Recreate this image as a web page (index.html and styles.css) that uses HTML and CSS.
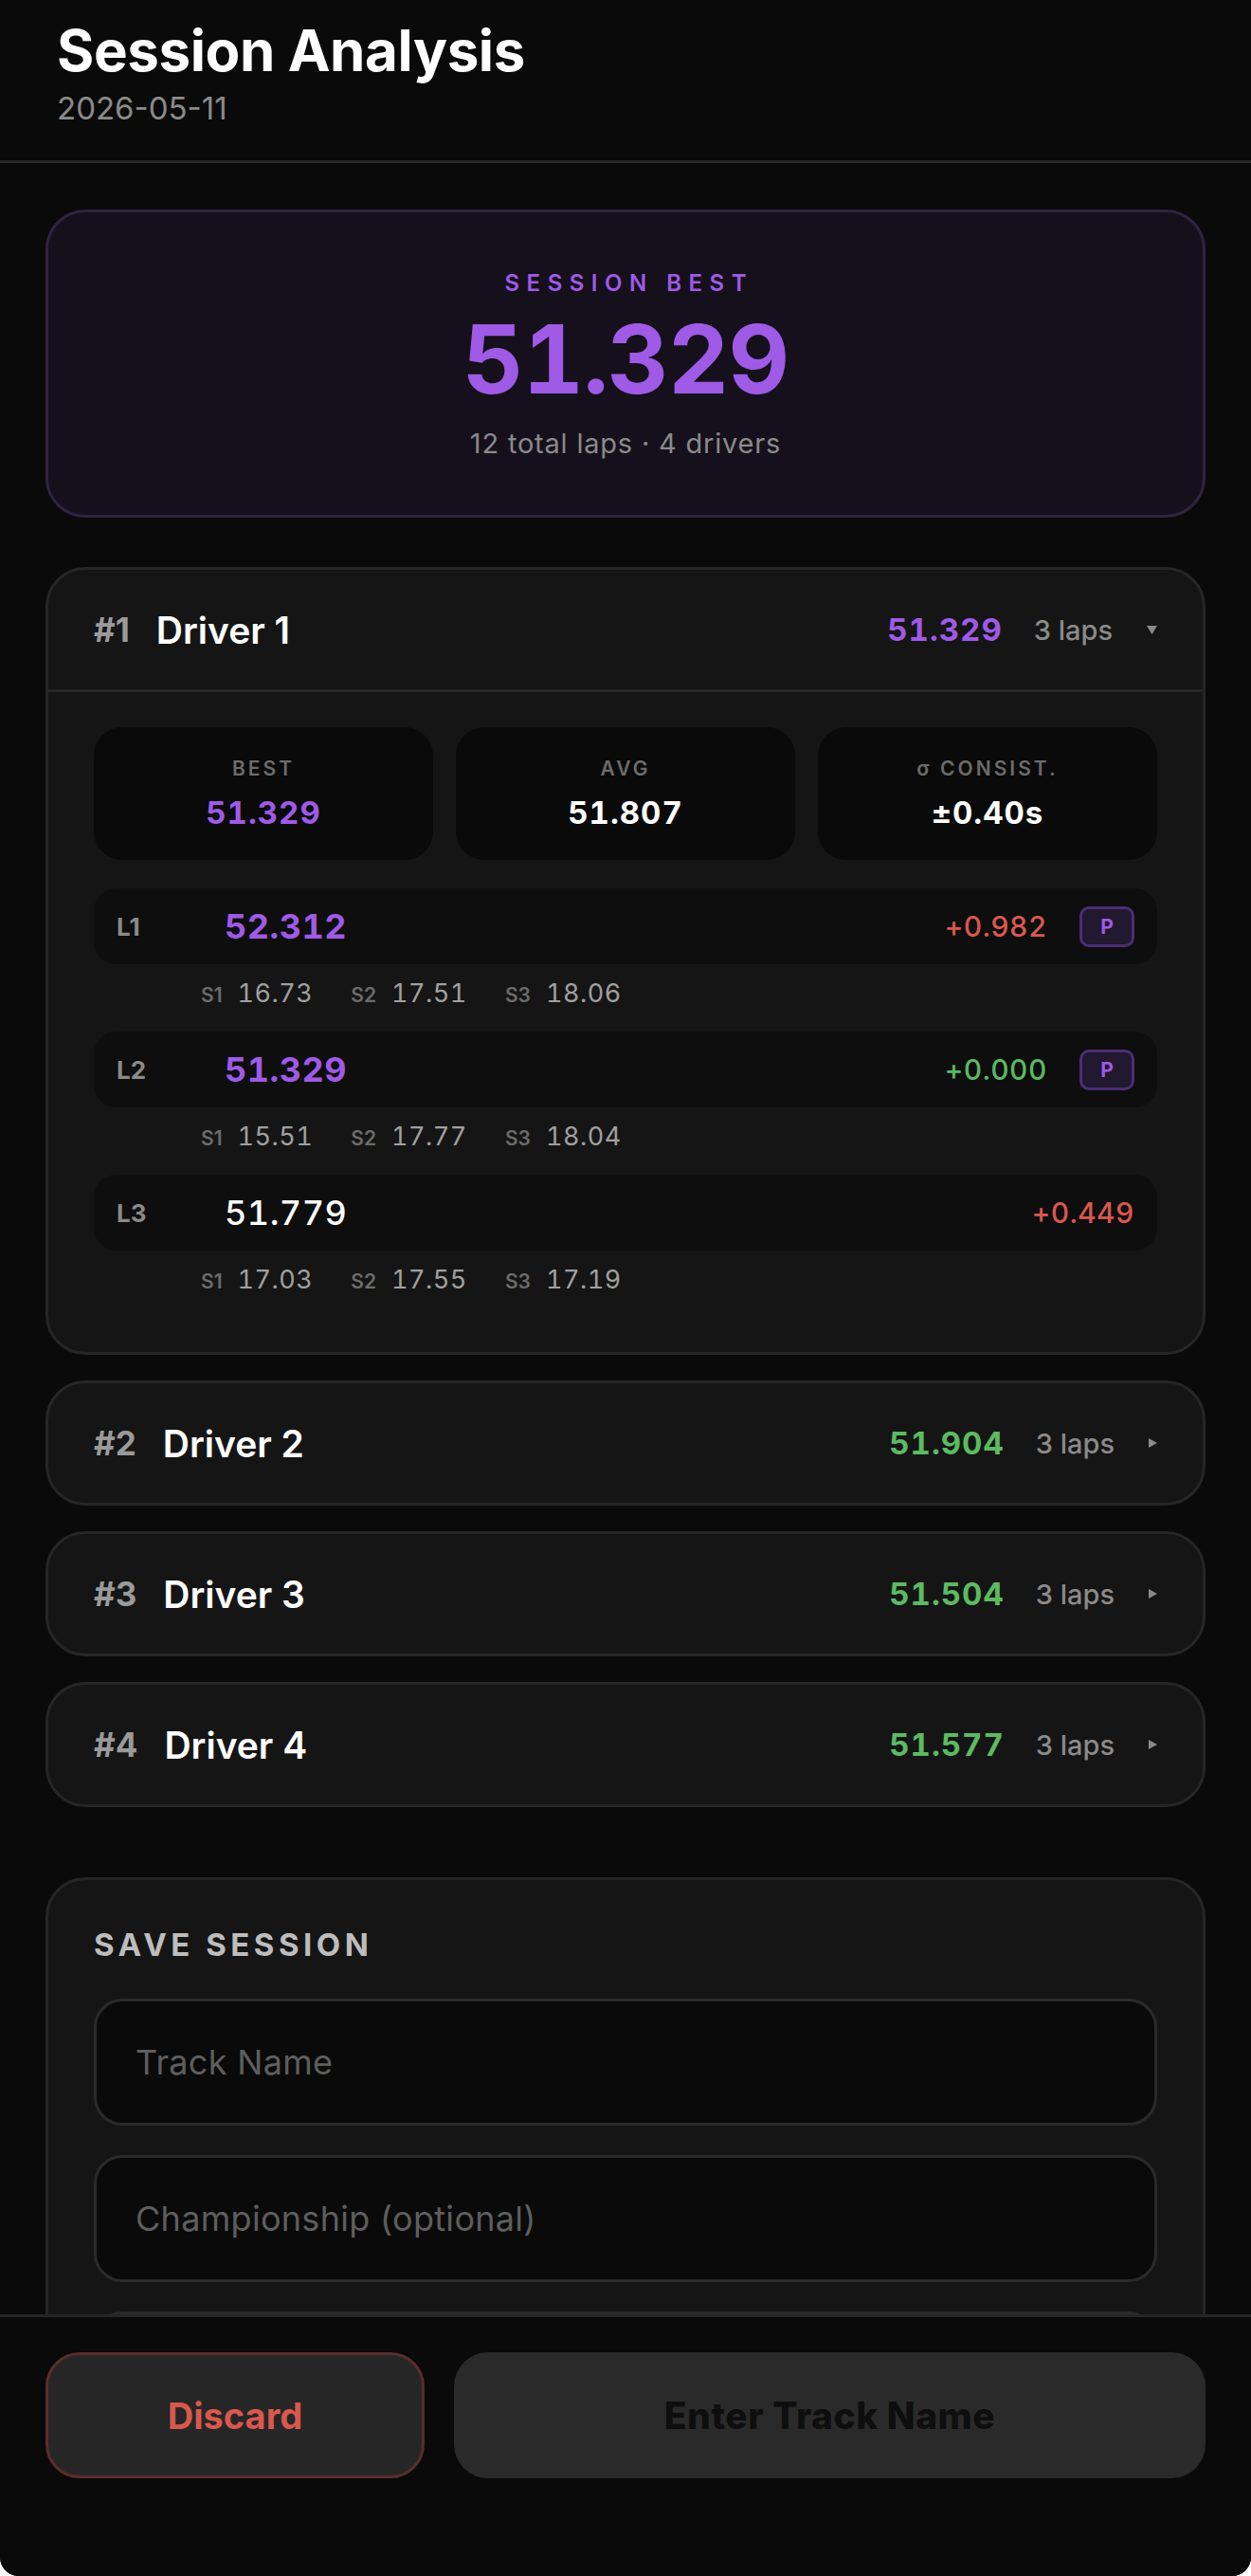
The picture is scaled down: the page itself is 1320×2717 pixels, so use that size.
FILE: index.html
```html
<!DOCTYPE html>
<html lang="en">
<head>
    <meta charset="UTF-8">
    <meta name="viewport" content="width=device-width, initial-scale=1.0">
    <title>Session Analysis</title>
    <link rel="stylesheet" href="styles.css">
</head>
<body>
<div class="app">
    <header class="top">
        <h1>Session Analysis</h1>
        <div class="date">2026-05-11</div>
    </header>

    <main class="content">
        <section class="best-card">
            <div class="best-label">SESSION BEST</div>
            <div class="best-time">51.329</div>
            <div class="best-sub">12 total laps · 4 drivers</div>
        </section>

        <div class="drivers">
            <div class="driver open">
                <div class="driver-head">
                    <span class="rank">#1</span>
                    <span class="name">Driver 1</span>
                    <span class="d-time purple">51.329</span>
                    <span class="laps">3 laps</span>
                    <svg class="caret" width="11" height="9" viewBox="0 0 11 9"><path d="M0 0h11L5.5 9z"/></svg>
                </div>
                <div class="driver-body">
                    <div class="stats">
                        <div class="stat">
                            <div class="stat-label">BEST</div>
                            <div class="stat-value purple">51.329</div>
                        </div>
                        <div class="stat">
                            <div class="stat-label">AVG</div>
                            <div class="stat-value">51.807</div>
                        </div>
                        <div class="stat">
                            <div class="stat-label">σ CONSIST.</div>
                            <div class="stat-value">±0.40s</div>
                        </div>
                    </div>

                    <div class="lap">
                        <div class="lap-row">
                            <span class="lap-no purple">L1</span>
                            <span class="lap-time purple">52.312</span>
                            <span class="delta red">+0.982</span>
                            <span class="badge">P</span>
                        </div>
                        <div class="sectors">
                            <span class="sec"><span class="sec-label">S1</span><span class="sec-val">16.73</span></span>
                            <span class="sec"><span class="sec-label">S2</span><span class="sec-val">17.51</span></span>
                            <span class="sec"><span class="sec-label">S3</span><span class="sec-val">18.06</span></span>
                        </div>
                    </div>

                    <div class="lap">
                        <div class="lap-row">
                            <span class="lap-no purple">L2</span>
                            <span class="lap-time purple">51.329</span>
                            <span class="delta green">+0.000</span>
                            <span class="badge">P</span>
                        </div>
                        <div class="sectors">
                            <span class="sec"><span class="sec-label">S1</span><span class="sec-val">15.51</span></span>
                            <span class="sec"><span class="sec-label">S2</span><span class="sec-val">17.77</span></span>
                            <span class="sec"><span class="sec-label">S3</span><span class="sec-val">18.04</span></span>
                        </div>
                    </div>

                    <div class="lap">
                        <div class="lap-row">
                            <span class="lap-no">L3</span>
                            <span class="lap-time plain">51.779</span>
                            <span class="delta red">+0.449</span>
                        </div>
                        <div class="sectors">
                            <span class="sec"><span class="sec-label">S1</span><span class="sec-val">17.03</span></span>
                            <span class="sec"><span class="sec-label">S2</span><span class="sec-val">17.55</span></span>
                            <span class="sec"><span class="sec-label">S3</span><span class="sec-val">17.19</span></span>
                        </div>
                    </div>
                </div>
            </div>

            <div class="driver">
                <div class="driver-head">
                    <span class="rank">#2</span>
                    <span class="name">Driver 2</span>
                    <span class="d-time green">51.904</span>
                    <span class="laps">3 laps</span>
                    <svg class="caret" width="9" height="10" viewBox="0 0 9 10"><path d="M0 0l9 5-9 5z"/></svg>
                </div>
            </div>

            <div class="driver">
                <div class="driver-head">
                    <span class="rank">#3</span>
                    <span class="name">Driver 3</span>
                    <span class="d-time green">51.504</span>
                    <span class="laps">3 laps</span>
                    <svg class="caret" width="9" height="10" viewBox="0 0 9 10"><path d="M0 0l9 5-9 5z"/></svg>
                </div>
            </div>

            <div class="driver">
                <div class="driver-head">
                    <span class="rank">#4</span>
                    <span class="name">Driver 4</span>
                    <span class="d-time green">51.577</span>
                    <span class="laps">3 laps</span>
                    <svg class="caret" width="9" height="10" viewBox="0 0 9 10"><path d="M0 0l9 5-9 5z"/></svg>
                </div>
            </div>
        </div>

        <section class="save-card">
            <h3>SAVE SESSION</h3>
            <input type="text" placeholder="Track Name">
            <input type="text" placeholder="Championship (optional)">
            <input type="text" placeholder="Notes (optional)">
        </section>
    </main>

    <footer class="actions">
        <button class="discard">Discard</button>
        <button class="save" disabled>Enter Track Name</button>
    </footer>
</div>
</body>
</html>
```

FILE: styles.css
```css
html {
    background: #fff;
}
body {
    margin: 0;
    font-family: Inter, "Noto Sans", sans-serif;
}
.app {
    height: 100vh;
    display: flex;
    flex-direction: column;
    background: #0a0a0a;
    color: #fff;
    border-radius: 0 0 20px 20px;
    overflow: hidden;
}
.purple { color: #9f5ae6; }
.green { color: #5cba62; }
.red { color: #d9584e; }

/* header */
.top {
    padding: 17px 60px 35px;
    border-bottom: 3px solid #262626;
}
.top h1 {
    margin: 0;
    font-size: 60px;
    line-height: 72px;
    font-weight: 700;
    letter-spacing: -0.4px;
}
.date {
    margin-top: 5px;
    font-size: 33px;
    line-height: 40px;
    color: #8a8a8a;
}

.content {
    flex: 1;
    min-height: 0;
    overflow: hidden;
    padding: 49px 48px 0;
}

/* session best */
.best-card {
    background: #15101c;
    border: 3px solid #2f2342;
    border-radius: 42px;
    padding: 60px 0 57px;
    text-align: center;
}
.best-label {
    font-size: 24px;
    line-height: 30px;
    font-weight: 600;
    letter-spacing: 7.5px;
    padding-left: 7.5px;
    color: #9f5ae6;
}
.best-time {
    margin-top: 15px;
    font-size: 100px;
    line-height: 100px;
    font-weight: 700;
    font-variant-numeric: tabular-nums;
    color: #9f5ae6;
    letter-spacing: -1px;
}
.best-sub {
    margin-top: 21px;
    font-size: 29px;
    line-height: 36px;
    color: #8a8a8a;
    letter-spacing: 0.8px;
}

/* drivers */
.drivers {
    margin-top: 52px;
    display: flex;
    flex-direction: column;
    gap: 27px;
}
.driver {
    background: #151515;
    border: 3px solid #262626;
    border-radius: 42px;
}
.driver-head {
    display: flex;
    align-items: center;
    height: 126px;
    padding: 0 48px;
}
.driver.open .driver-head {
    border-bottom: 3px solid #262626;
}
.rank {
    font-size: 35px;
    font-weight: 700;
    color: #9a9a9a;
    margin-right: 28px;
}
.name {
    flex: 1;
    font-size: 39px;
    font-weight: 600;
}
.d-time {
    font-size: 33px;
    font-weight: 700;
    font-variant-numeric: tabular-nums;
    letter-spacing: 1px;
}
.laps {
    margin-left: 33px;
    font-size: 29px;
    font-weight: 500;
    color: #8a8a8a;
}
.caret {
    margin-left: 36px;
    fill: #8a8a8a;
}

.driver-body {
    padding: 37px 48px 36px;
}
.stats {
    display: grid;
    grid-template-columns: repeat(3, 1fr);
    gap: 24px;
    margin-bottom: 30px;
}
.stat {
    background: #0a0a0a;
    border-radius: 30px;
    padding: 30px 0;
    text-align: center;
}
.stat-label {
    font-size: 21px;
    line-height: 28px;
    font-weight: 600;
    letter-spacing: 3px;
    color: #6b6b6b;
}
.stat-value {
    margin-top: 12px;
    font-size: 33px;
    line-height: 40px;
    font-weight: 700;
    font-variant-numeric: tabular-nums;
    letter-spacing: 1px;
}

/* laps */
.lap-row {
    display: flex;
    align-items: center;
    height: 80px;
    padding: 0 24px;
    background: #0e0e0e;
    border-radius: 24px;
}
.lap-no {
    width: 114px;
    font-size: 26px;
    font-weight: 700;
    color: #8a8a8a;
}
.lap-time {
    flex: 1;
    font-size: 36px;
    font-weight: 700;
    font-variant-numeric: tabular-nums;
    letter-spacing: 0.5px;
}
.lap-time.plain {
    font-weight: 500;
    color: #fff;
}
.delta {
    font-size: 30px;
    font-weight: 500;
    font-variant-numeric: tabular-nums;
    letter-spacing: 0.5px;
}
.badge {
    margin-left: 34px;
    width: 58px;
    height: 43px;
    box-sizing: border-box;
    border: 3px solid #4a2e75;
    background: #22182f;
    border-radius: 10px;
    display: flex;
    align-items: center;
    justify-content: center;
    font-size: 21px;
    font-weight: 700;
    color: #9f5ae6;
}
.sectors {
    display: flex;
    align-items: center;
    gap: 40px;
    height: 36px;
    padding: 12px 0 23px 113px;
}
.sec {
    display: flex;
    align-items: baseline;
}
.sec-label {
    margin-right: 16px;
    font-size: 21px;
    font-weight: 600;
    color: #6b6b6b;
}
.sec-val {
    font-size: 27px;
    font-variant-numeric: tabular-nums;
    color: #a0a0a0;
    letter-spacing: 0.5px;
}

/* save form */
.save-card {
    margin-top: 74px;
    background: #151515;
    border: 3px solid #262626;
    border-radius: 42px;
    padding: 48px;
}
.save-card h3 {
    margin: 0 0 37px;
    font-size: 33px;
    line-height: 40px;
    font-weight: 700;
    letter-spacing: 4.5px;
    color: #bdbdbd;
}
.save-card input {
    display: block;
    width: 100%;
    box-sizing: border-box;
    height: 134px;
    margin-bottom: 31px;
    padding: 0 41px;
    background: #0a0a0a;
    border: 3px solid #2a2a2a;
    border-radius: 30px;
    font-family: inherit;
    font-size: 36px;
    letter-spacing: 0.3px;
    color: #fff;
    outline: none;
}
.save-card input::placeholder {
    color: #5e5e5e;
}

/* bottom actions */
.actions {
    flex-shrink: 0;
    display: flex;
    gap: 31px;
    padding: 37px 48px 103px;
    border-top: 3px solid #262626;
    background: #0a0a0a;
}
.actions button {
    height: 133px;
    border-radius: 36px;
    font-family: inherit;
    font-size: 38px;
    font-weight: 700;
}
.discard {
    flex: 0 0 400px;
    background: #262626;
    border: 3px solid #5a2d2d;
    color: #d9584e;
}
.save {
    flex: 1;
    background: #2a2a2a;
    border: none;
    color: #0e0e0e;
    font-size: 39px !important;
    font-weight: 800 !important;
    letter-spacing: 0.5px;
}
```
